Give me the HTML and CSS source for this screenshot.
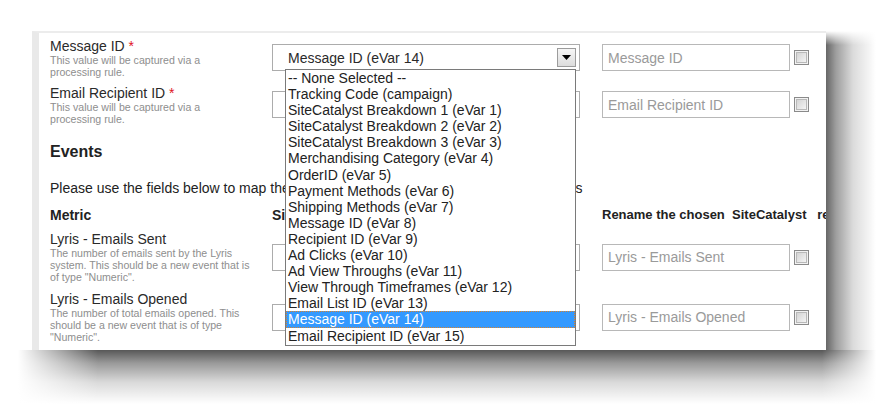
FILE: index.html
```html
<!DOCTYPE html>
<html lang="en">
<head>
<meta charset="utf-8">
<title>Lyris mapping</title>
<link rel="stylesheet" href="styles.css">
</head>
<body>
<div class="stage">
  <div class="frame">
  <div class="card">
    <div class="grid rows-top">
      <div class="field">
        <div class="label">Message ID <span class="req">*</span></div>
        <div class="help">This value will be captured via a<br>processing rule.</div>
      </div>
      <div class="select-wrap">
        <div class="select"><span>Message ID (eVar 14)</span><span class="arrow"><svg width="9" height="5" viewBox="0 0 9 5"><path d="M0 0H9L4.5 5Z" fill="#000"/></svg></span></div>
        <ul class="dropdown">
          <li>-- None Selected --</li>
          <li>Tracking Code (campaign)</li>
          <li>SiteCatalyst Breakdown 1 (eVar 1)</li>
          <li>SiteCatalyst Breakdown 2 (eVar 2)</li>
          <li>SiteCatalyst Breakdown 3 (eVar 3)</li>
          <li>Merchandising Category (eVar 4)</li>
          <li>OrderID (eVar 5)</li>
          <li>Payment Methods (eVar 6)</li>
          <li>Shipping Methods (eVar 7)</li>
          <li>Message ID (eVar 8)</li>
          <li>Recipient ID (eVar 9)</li>
          <li>Ad Clicks (eVar 10)</li>
          <li>Ad View Throughs (eVar 11)</li>
          <li>View Through Timeframes (eVar 12)</li>
          <li>Email List ID (eVar 13)</li>
          <li class="sel">Message ID (eVar 14)</li>
          <li>Email Recipient ID (eVar 15)</li>
        </ul>
      </div>
      <input class="text" type="text" placeholder="Message ID">
      <input class="check" type="checkbox">

      <div class="field">
        <div class="label">Email Recipient ID <span class="req">*</span></div>
        <div class="help">This value will be captured via a<br>processing rule.</div>
      </div>
      <div class="select-wrap">
        <div class="select"><span>Email Recipient ID (eVar 15)</span><span class="arrow"><svg width="9" height="5" viewBox="0 0 9 5"><path d="M0 0H9L4.5 5Z" fill="#000"/></svg></span></div>
      </div>
      <input class="text" type="text" placeholder="Email Recipient ID">
      <input class="check" type="checkbox">
    </div>

    <h2 class="section">Events</h2>
    <p class="intro">Please use the fields below to map the Lyris metrics to SiteCatalyst conversion events</p>

    <div class="grid head">
      <div>Metric</div>
      <div>SiteCatalyst Event</div>
      <div class="rename">Rename the chosen&nbsp; SiteCatalyst&nbsp;&nbsp; report name</div>
      <div></div>
    </div>

    <div class="grid rows-events">
      <div class="field">
        <div class="label">Lyris - Emails Sent</div>
        <div class="help">The number of emails sent by the Lyris<br>system. This should be a new event that is<br>of type "Numeric".</div>
      </div>
      <div class="select-wrap">
        <div class="select"><span>Emails Sent (event 1)</span><span class="arrow"><svg width="9" height="5" viewBox="0 0 9 5"><path d="M0 0H9L4.5 5Z" fill="#000"/></svg></span></div>
      </div>
      <input class="text" type="text" placeholder="Lyris - Emails Sent">
      <input class="check" type="checkbox">

      <div class="field">
        <div class="label">Lyris - Emails Opened</div>
        <div class="help">The number of total emails opened. This<br>should be a new event that is of type<br>"Numeric".</div>
      </div>
      <div class="select-wrap">
        <div class="select"><span>Emails Opened (event 2)</span><span class="arrow"><svg width="9" height="5" viewBox="0 0 9 5"><path d="M0 0H9L4.5 5Z" fill="#000"/></svg></span></div>
      </div>
      <input class="text" type="text" placeholder="Lyris - Emails Opened">
      <input class="check" type="checkbox">
    </div>
  </div>
  </div>
</div>
</body>
</html>
```

FILE: styles.css
```css
html, body {
  margin: 0;
  padding: 0;
  background: #ffffff;
}

body {
  font-family: "Liberation Sans", Arial, sans-serif;
  color: #333333;
}

.stage {
  box-sizing: border-box;
  width: 891px;
  height: 415px;
  padding: 31px 0 0 32px;
  overflow: hidden;
}

.frame {
  position: relative;
  width: 794px;
  height: 319px;
}

/* drop shadow, right side */
.frame::before {
  content: "";
  position: absolute;
  z-index: 0;
  left: 794px;
  top: 0;
  width: 50px;
  height: 319px;
  background:
    linear-gradient(to bottom, #ffffff 0, rgba(255, 255, 255, 0) 14px),
    linear-gradient(to right, rgba(0, 0, 0, 0.60) 0, rgba(0, 0, 0, 0.38) 10px, rgba(0, 0, 0, 0.14) 27px, rgba(0, 0, 0, 0) 50px);
}

/* drop shadow, bottom side */
.frame::after {
  content: "";
  position: absolute;
  z-index: 0;
  left: -14px;
  top: 319px;
  width: 858px;
  height: 54px;
  background:
    linear-gradient(to right, #ffffff 0, rgba(255, 255, 255, 0) 80px),
    linear-gradient(to left, #ffffff 0, rgba(255, 255, 255, 0) 54px),
    linear-gradient(to bottom, rgba(0, 0, 0, 0.66) 0, rgba(0, 0, 0, 0.40) 13px, rgba(0, 0, 0, 0.15) 32px, rgba(0, 0, 0, 0) 54px);
}

.card {
  position: relative;
  z-index: 1;
  box-sizing: border-box;
  width: 794px;
  height: 319px;
  padding: 1px 0 0 11px;
  background: #ffffff;
  border-left: 7px solid #e9e9e9;
  border-top: 2px solid #ececec;
  overflow: hidden;
}

.grid {
  display: grid;
  grid-template-columns: 222px 330px 192px 15px;
  align-items: center;
}

.rows-top {
  grid-auto-rows: 47px;
}

.rows-events {
  grid-auto-rows: 60px;
  margin-top: 4px;
}

.field {
  display: flex;
  flex-direction: column;
}

.label {
  font-size: 14px;
  line-height: 16px;
  color: #2a2a2a;
}

.req {
  color: #e0141e;
}

.help {
  font-size: 10.6px;
  line-height: 12px;
  color: #8e8e8e;
}

.select-wrap {
  position: relative;
  width: 308px;
  height: 27px;
}

.select {
  box-sizing: border-box;
  width: 308px;
  height: 27px;
  border: 1px solid #acacac;
  background: #ffffff;
  display: flex;
  align-items: center;
  justify-content: space-between;
  padding: 0 3px 0 15px;
  font-size: 14px;
  color: #2a2a2a;
  white-space: nowrap;
}

.arrow {
  box-sizing: border-box;
  width: 19px;
  height: 19px;
  border: 1px solid #9c9c9c;
  background: linear-gradient(#f6f6f6, #dcdcdc);
  display: flex;
  align-items: center;
  justify-content: center;
}

.dropdown {
  position: absolute;
  z-index: 5;
  left: 13px;
  top: 25px;
  box-sizing: border-box;
  width: 291px;
  margin: 0;
  padding: 0 0 1px 0;
  list-style: none;
  background: #ffffff;
  border: 1px solid #7a7a7a;
  font-size: 14px;
  color: #222222;
}

.dropdown li {
  box-sizing: border-box;
  height: 16.1px;
  line-height: 16.1px;
  padding-left: 2px;
  white-space: nowrap;
}

.dropdown li.sel {
  background: #3399ff;
  color: #ffffff;
  outline: 1px dotted #d9822b;
  outline-offset: -1px;
}

.text {
  box-sizing: border-box;
  width: 188px;
  height: 27px;
  margin: 0;
  padding: 0 5px;
  border: 1px solid #b8b8b8;
  font-family: "Liberation Sans", Arial, sans-serif;
  font-size: 14px;
  color: #333333;
  background: #ffffff;
  outline: none;
}

.text::placeholder {
  color: #9a9a9a;
}

.check {
  appearance: none;
  -webkit-appearance: none;
  box-sizing: border-box;
  width: 15px;
  height: 15px;
  margin: 0;
  border: 1px solid #8a8a8a;
  background: linear-gradient(135deg, #cdcdcd 0%, #e6e6e6 55%, #fbfbfb 100%);
  box-shadow: inset 0 0 0 1px #f2f2f2, inset 0 0 0 2px #b9b9b9;
}

.section {
  margin: 14px 0 0 0;
  font-size: 16px;
  line-height: 19px;
  font-weight: bold;
  color: #222222;
}

.intro {
  margin: 19px 0 0 0;
  font-size: 14px;
  line-height: 16px;
  color: #222222;
  white-space: nowrap;
}

.head {
  margin-top: 11px;
  font-size: 14px;
  line-height: 16px;
  font-weight: bold;
  color: #222222;
  white-space: nowrap;
}

.rename {
  font-size: 13px;
}
```
